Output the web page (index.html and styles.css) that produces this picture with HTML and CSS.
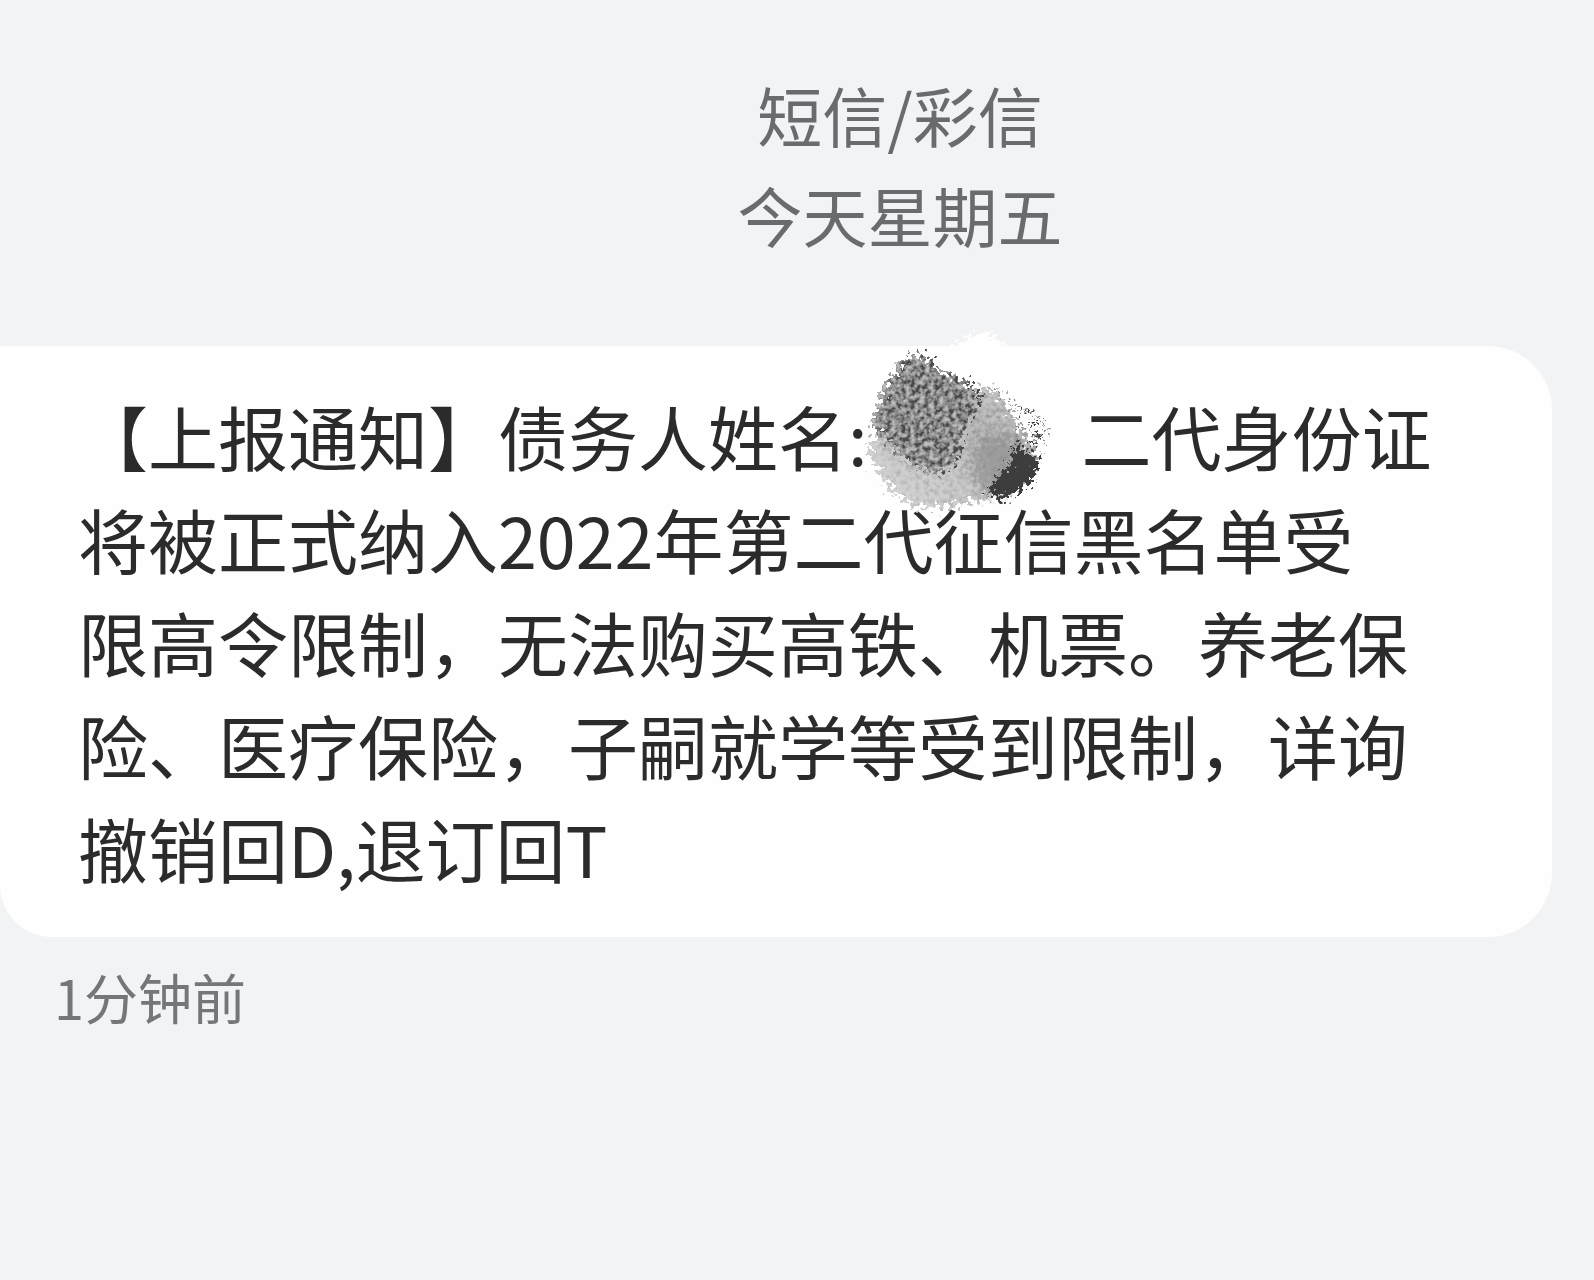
FILE: index.html
```
<!DOCTYPE html>
<html lang="zh-CN">
<head>
    <meta charset="UTF-8">
    <meta name="viewport" content="width=device-width, initial-scale=1.0">
    <title>短信/彩信</title>
    <link rel="stylesheet" href="styles.css">
</head>
<body>
    <main class="thread">
        <header class="thread-info">
            <p>短信/彩信</p>
            <p>今天星期五</p>
        </header>

        <article class="bubble">
            <p>【上报通知】债务人姓名:<span class="redacted"><svg class="smudge" viewBox="0 0 780 630" aria-hidden="true">
                <defs>
                    <!-- ragged edges and dark grain -->
                    <filter id="grain" x="-20%" y="-20%" width="140%" height="140%">
                        <feTurbulence type="fractalNoise" baseFrequency="0.07" numOctaves="2" seed="4" result="noise"/>
                        <feDisplacementMap in="SourceGraphic" in2="noise" scale="90" xChannelSelector="R" yChannelSelector="G" result="shape"/>
                        <feColorMatrix in="noise" type="matrix" values="2.4 0 0 0 -0.78  2.4 0 0 0 -0.78  2.4 0 0 0 -0.78  0 0 0 0 0.45" result="speck"/>
                        <feComposite in="speck" in2="shape" operator="in" result="inside"/>
                        <feMerge>
                            <feMergeNode in="shape"/>
                            <feMergeNode in="inside"/>
                        </feMerge>
                    </filter>
                    <!-- same, with a faint light grain -->
                    <filter id="dust" x="-20%" y="-20%" width="140%" height="140%">
                        <feTurbulence type="fractalNoise" baseFrequency="0.07" numOctaves="2" seed="7" result="noise"/>
                        <feDisplacementMap in="SourceGraphic" in2="noise" scale="90" xChannelSelector="R" yChannelSelector="G" result="shape"/>
                        <feColorMatrix in="noise" type="matrix" values="2 0 0 0 -0.25  2 0 0 0 -0.25  2 0 0 0 -0.25  0 0 0 0 0.22" result="speck"/>
                        <feComposite in="speck" in2="shape" operator="in" result="inside"/>
                        <feMerge>
                            <feMergeNode in="shape"/>
                            <feMergeNode in="inside"/>
                        </feMerge>
                    </filter>
                    <filter id="rough" x="-20%" y="-20%" width="140%" height="140%">
                        <feTurbulence type="fractalNoise" baseFrequency="0.08" numOctaves="2" seed="9" result="noise"/>
                        <feDisplacementMap in="SourceGraphic" in2="noise" scale="70" xChannelSelector="R" yChannelSelector="G"/>
                    </filter>
                    <filter id="soft" x="-20%" y="-20%" width="140%" height="140%">
                        <feGaussianBlur in="SourceGraphic" stdDeviation="14" result="blur"/>
                        <feTurbulence type="fractalNoise" baseFrequency="0.08" numOctaves="2" seed="2" result="noise"/>
                        <feDisplacementMap in="blur" in2="noise" scale="120" xChannelSelector="R" yChannelSelector="G"/>
                    </filter>
                    <linearGradient id="ash" x1="0" y1="1" x2="1" y2="0">
                        <stop offset="0" stop-color="#d0d0d0"/>
                        <stop offset="0.4" stop-color="#b8b8b8"/>
                        <stop offset="0.7" stop-color="#a2a2a2"/>
                        <stop offset="1" stop-color="#c4c4c4"/>
                    </linearGradient>
                </defs>
                <path filter="url(#rough)" fill="#fefefe" d="M300 110 L350 80 L385 60 L440 38 L490 75 L560 150 L620 290 L600 400 L420 300 Z"/>
                <path filter="url(#dust)" fill="url(#ash)" d="M90 375 L240 280 L390 215 L455 205 L500 255 L540 330 L590 400 L580 470 L480 530 L410 550 L300 570 L210 560 L150 510 L95 430 Z"/>
                <path filter="url(#soft)" fill="#888888" opacity="0.6" d="M420 350 L520 350 L560 400 L500 520 L430 530 L390 450 Z"/>
                <path filter="url(#grain)" fill="#646464" d="M185 130 L230 112 L270 125 L300 160 L380 190 L420 240 L395 300 L365 350 L365 410 L310 462 L250 460 L190 420 L140 370 L98 335 L110 280 L135 210 L160 170 Z"/>
                <path filter="url(#rough)" fill="#3d3d3d" d="M530 375 L560 395 L600 425 L582 485 L545 515 L495 545 L440 530 L480 470 L515 435 Z"/>
                <path filter="url(#rough)" fill="none" stroke="#888888" stroke-width="8" stroke-dasharray="8 15" d="M480 225 L540 280 L565 275 L610 310 L625 345 L600 365 L570 335 L535 315 L550 355 L600 385"/>
                <path filter="url(#rough)" fill="none" stroke="#3d3d3d" stroke-width="12" stroke-dasharray="12 30" d="M385 200 L420 250 M562 275 L600 350 L570 375 L590 400"/>
            </svg></span>二代身份证<br>
            将被正式纳入2022年第二代征信黑名单受<br>
            限高令限制，无法购买高铁、机票。养老保<br>
            险、医疗保险，子嗣就学等受到限制，详询<br>
            撤销回D,退订回T</p>
        </article>

        <time class="sent">1分钟前</time>
    </main>
</body>
</html>
```
FILE: styles.css
```
/* General Styling */
* {
    margin: 0;
    padding: 0;
    box-sizing: border-box;
}

body {
    font-family: "Noto Sans CJK SC", sans-serif;
    background: #f1f3f4;
    min-height: 100vh;
    overflow-x: hidden;
}

.thread {
    display: flex;
    flex-direction: column;
    padding: 64px 42px 40px 0;
}

.thread-info {
    padding-left: 248px;
    text-align: center;
    font-size: 65px;
    line-height: 100px;
    color: #696b6d;
}

/* Message bubble */
.bubble {
    margin-top: 82px;
    padding: 38px 78px;
    background: #fefefe;
    border-radius: 0 64px 64px 52px;
    font-size: 70px;
    line-height: 103px;
    color: #2b2b2b;
    white-space: nowrap;
}

/* Hidden name */
.redacted {
    display: inline-block;
    position: relative;
    width: 214px;
    height: 70px;
}

.smudge {
    position: absolute;
    left: -28px;
    top: -78px;
    width: 260px;
    height: 210px;
}

.sent {
    padding: 20px 54px;
    font-size: 54px;
    line-height: 80px;
    color: #747678;
}
```
